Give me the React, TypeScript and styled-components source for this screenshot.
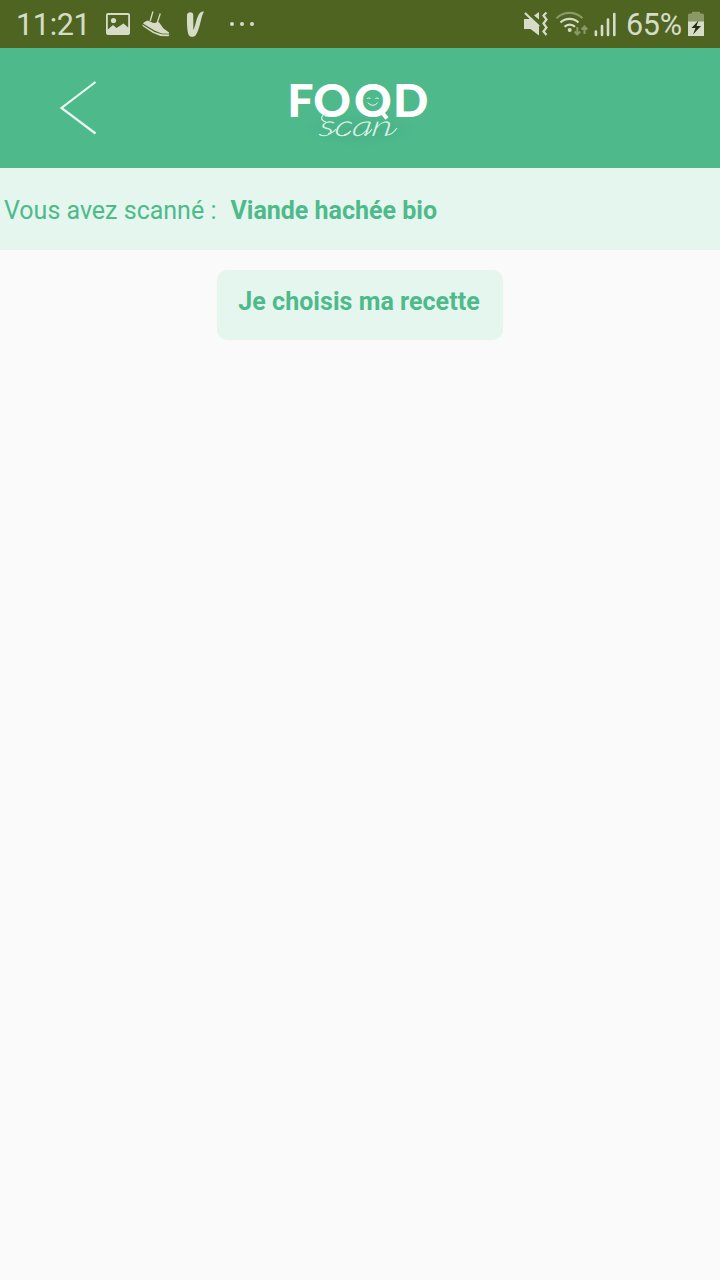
import React from 'react';
import styled, { createGlobalStyle } from 'styled-components';

const GlobalStyle = createGlobalStyle`
  body {
    margin: 0;
    background: #fafafa;
    font-family: Roboto, "Liberation Sans", sans-serif;
  }
  svg { display: block; flex: none; }
`;

const Screen = styled.div`
  width: 720px;
  min-height: 1280px;
  display: flex;
  flex-direction: column;
  background: #fafafa;
`;

const StatusBar = styled.div`
  height: 48px;
  box-sizing: border-box;
  padding: 0 15px 0 16px;
  display: flex;
  align-items: center;
  justify-content: space-between;
  background: #506422;
  color: #d6dcc8;
`;

const StatusGroup = styled.div`
  display: flex;
  align-items: center;
  height: 48px;
`;

const StatusText = styled.span<{ $width: number }>`
  width: ${(p) => p.$width}px;
  font-size: 30.5px;
  line-height: 48px;
  padding-top: 2px;
  letter-spacing: -0.3px;
  white-space: nowrap;
`;

const Header = styled.header`
  height: 120px;
  display: grid;
  grid-template-columns: 1fr 160px 1fr;
  align-items: center;
  background: #4eba8c;
`;

const BackButton = styled.button`
  justify-self: start;
  margin-left: 52px;
  padding: 0;
  border: 0;
  background: none;
  color: #e9f8f1;
`;

const ScanBanner = styled.section`
  height: 82px;
  box-sizing: border-box;
  padding: 4px 4px 0;
  display: flex;
  align-items: center;
  gap: 14px;
  background: #e4f6ed;
  color: #4eba8c;
  font-size: 25px;
  line-height: 30px;
  white-space: pre;
`;

const ScanLabel = styled.span`
  letter-spacing: 0;
`;

const ProductName = styled.strong`
  font-weight: 700;
`;

const Content = styled.main`
  display: flex;
  justify-content: center;
  padding-top: 20px;
`;

const RecipeButton = styled.button`
  width: 286px;
  height: 70px;
  padding: 0 2px 7px 0;
  border: 0;
  border-radius: 10px;
  background: #e4f6ed;
  color: #4eba8c;
  font: 700 25px/30px Roboto, "Liberation Sans", sans-serif;
  letter-spacing: 0.04px;
  white-space: nowrap;
`;

const NotificationIcons = () => (
  <svg width="165" height="48" viewBox="95 0 165 48" fill="#d6dcc8">
    <path fillRule="evenodd" d="M108 13h20a2 2 0 0 1 2 2v18a2 2 0 0 1-2 2h-20a2 2 0 0 1-2-2V15a2 2 0 0 1 2-2zm-.2 2v14.500l5.200-4.500 3.500 3 7-4.500 4.700 4V15z" />
    <circle cx="113.500" cy="20.500" r="2.600" />
    <path d="M144.500 22l3-1.500 3.200 1.200q3.500 2.500 6.500.3l1.800.2 4.500 6.300 5.500 4v1.200l-7.500-.2-7-3-11.500-7z" />
    <path d="M142.300 24.500l12.200 7.500 7 2.300 8 .1-1 1.800-8-.2-7.500-3-10.500-7z" />
    <path d="M150.200 21l2.700-9.500M157.300 22.500l3-9" stroke="#d6dcc8" strokeWidth="1.300" fill="none" />
    <path d="M187 15c.2-3.500 5.800-3.700 6.200-.5l.2 15.500c2.300-4 3-14 7-17.500q1.500-1.200 3.600-1c-3.600 6-3.600 17-8.500 24-2 2-5.300 1.800-6.800-.5-1.800-4-1.800-13-1.700-20z" />
    <circle cx="232" cy="24" r="2" />
    <circle cx="242" cy="24" r="2" />
    <circle cx="252" cy="24" r="2" />
  </svg>
);

const SignalIcons = () => (
  <svg width="106" height="48" viewBox="520 0 106 48" fill="none" stroke="#d6dcc8">
    <path d="M524 19h5l2-1.500 8 7.500v10.500L530.500 29H524zM534 15.500l5-3.500v7.500z" fill="#d6dcc8" stroke="none" />
    <path d="M525 13l14 13.500" strokeWidth="2.200" />
    <path d="M546.500 12.500l-3 3 3 4-3 4 3 4-3 4 3 3.500" strokeWidth="2.200" />
    <g strokeWidth="2.200">
      <path d="M556.500 18.200a18.500 18.500 0 0 1 26 0" stroke="#8b9965" />
      <path d="M560.500 22.500a13 13 0 0 1 18 0M564.500 26.800a7.400 7.400 0 0 1 10.500 0" />
    </g>
    <circle cx="569.700" cy="30" r="2" fill="#d6dcc8" stroke="none" />
    <path d="M577.300 27v7M574.500 31.500l2.800 3 2.800-3M584.500 34v-7M581.700 29.500l2.800-3 2.800 3" stroke="#8b9965" strokeWidth="2" />
    <path d="M595.900 31.500v3.500M602 26v9M608 19.500V35M614.300 14v21" strokeWidth="2.600" strokeLinecap="round" />
  </svg>
);

const BatteryIcon = () => (
  <svg width="17" height="48" viewBox="688 0 17 48">
    <path d="M688 22v-7q0-1.500 1.500-1.500h2.500v-1.800h8v1.800h2.500q1.500 0 1.500 1.500v7z" fill="#8b9965" />
    <path d="M688 21.500h16V36h-16z" fill="#d6dcc8" />
    <path d="M698.500 20.500l-7 7.500h4l-2.500 6.500 8-8.500h-4.500z" fill="#243009" />
  </svg>
);

const Logo = () => (
  <svg width="160" height="120" viewBox="280 48 160 120" fill="#fff">
    <defs>
      <radialGradient id="logoShade">
        <stop offset="0" stopColor="#48b085" />
        <stop offset="1" stopColor="#4eba8c" />
      </radialGradient>
    </defs>
    <ellipse cx="360" cy="130" rx="62" ry="18" fill="url(#logoShade)" />
    <text y="117" x="287.300 313.300 354 393" fontFamily="Lato, sans-serif" fontWeight="900" fontSize="46.500">FOOD</text>
    <g fill="none" stroke="#e9f8f1" strokeLinecap="round">
      <path d="M367.500 98.300q1.300-.9 2.600 0M375.700 98.300q1.300-.9 2.600 0M368 103q5 5 9.500 0" strokeWidth="1" />
      <path d="M382.500 113l4.500 5.500" stroke="#fff" strokeWidth="4" strokeLinecap="butt" />
    </g>
    <text transform="translate(318 136) skewX(-10) scale(1.350 1)" fontFamily="Lato, sans-serif" fontWeight="300" fontStyle="italic" fontSize="29" fill="#d8f1e5">scan</text>
    <path d="M326 122q-7-2-3-7 3-2 3 2M328 134q5-1 8-5M344 135q4-1 7-4M364 135q5-1 8-6M387 135q5 0 10-7" fill="none" stroke="#d8f1e5" strokeWidth="1.200" />
  </svg>
);

export default function App() {
  return (
    <>
      <GlobalStyle />
      <Screen>
        <StatusBar>
          <StatusGroup>
            <StatusText $width={79}>11:21</StatusText>
            <NotificationIcons />
          </StatusGroup>
          <StatusGroup>
            <SignalIcons />
            <StatusText $width={62}>65%</StatusText>
            <BatteryIcon />
          </StatusGroup>
        </StatusBar>
        <Header>
          <BackButton aria-label="Retour">
            <svg width="52" height="60" viewBox="52 78 52 60" fill="none" stroke="currentColor" strokeWidth="2.200">
              <path d="M95.500 82L61.500 108 95.500 133.500" />
            </svg>
          </BackButton>
          <Logo />
        </Header>
        <ScanBanner>
          <ScanLabel>Vous avez scanné :</ScanLabel>
          <ProductName>Viande hachée bio</ProductName>
        </ScanBanner>
        <Content>
          <RecipeButton>Je choisis ma recette</RecipeButton>
        </Content>
      </Screen>
    </>
  );
}
